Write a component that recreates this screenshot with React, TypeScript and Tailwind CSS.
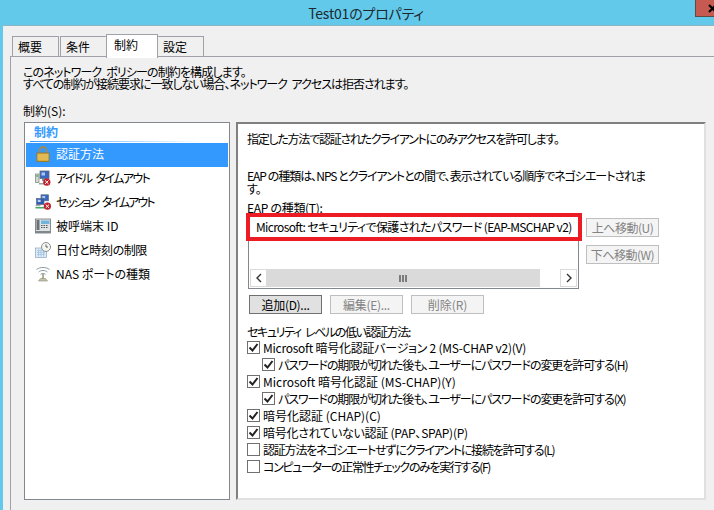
import React from "react";

const LockIcon = () => (
  <svg width="16" height="16" viewBox="0 0 16 16">
    <path d="M4.5 8V4.5a3.5 3.5 0 0 1 7 0V8" fill="none" stroke="#a08a50" strokeWidth="1.8" />
    <rect x="2" y="7" width="12" height="8.5" fill="#d8a93c" stroke="#9a7420" strokeWidth="0.8" />
    <path d="M2.5 9h11M2.5 11h11M2.5 13h11" stroke="#f0cf70" strokeWidth="0.9" />
  </svg>
);

const RedX = ({ x, y }: { x: number; y: number }) => (
  <g>
    <circle cx={x} cy={y} r="3.6" fill="#c0202a" />
    <path d={`M${x - 1.7} ${y - 1.7}l3.4 3.4M${x + 1.7} ${y - 1.7}l-3.4 3.4`} stroke="#fff" strokeWidth="1" />
  </g>
);

const IdleIcon = () => (
  <svg width="16" height="16" viewBox="0 0 16 16">
    <rect x="0.5" y="4" width="3.5" height="8.5" fill="#d4d8d4" stroke="#7a8078" strokeWidth="0.7" />
    <rect x="1.2" y="5.2" width="2" height="1.5" fill="#50b050" />
    <rect x="5" y="1" width="9" height="7.5" fill="#3a66c0" stroke="#5a6a80" strokeWidth="0.8" />
    <rect x="6.5" y="2.5" width="3.5" height="3" fill="#a8c8f0" />
    <path d="M7 9h5v2H7z" fill="#8a94a0" />
    <path d="M4 13h7v1.5H4z" fill="#9aa2aa" />
    <RedX x={11.8} y={12.2} />
  </svg>
);

const SessionIcon = () => (
  <svg width="16" height="16" viewBox="0 0 16 16">
    <rect x="6" y="0.8" width="7.5" height="6" fill="#3a66c0" stroke="#5a6a80" strokeWidth="0.7" />
    <rect x="7.2" y="2" width="3" height="2.4" fill="#a8c8f0" />
    <rect x="1.5" y="4.5" width="7.5" height="6" fill="#2f58b0" stroke="#5a6a80" strokeWidth="0.7" />
    <rect x="2.7" y="5.7" width="3" height="2.4" fill="#b8d4f4" />
    <path d="M0.5 11h5v1.2h-5z" fill="#a0a8a8" />
    <path d="M0.5 13h9v1.5h-9z" fill="#40a860" />
    <RedX x={12.4} y={12.2} />
  </svg>
);

const PhoneIcon = () => (
  <svg width="16" height="16" viewBox="0 0 16 16">
    <rect x="0.5" y="1" width="15" height="14" fill="#dfe2e2" stroke="#6c7478" strokeWidth="0.8" />
    <rect x="1.5" y="2" width="3" height="10" fill="#687078" />
    <rect x="6" y="2.5" width="8.5" height="3.5" fill="#70b4dc" />
    <path d="M6 7.5h1.5M8.5 7.5H10M11 7.5h1.5M6 9.5h1.5M8.5 9.5H10M11 9.5h1.5" stroke="#505860" strokeWidth="1" />
    <path d="M1 13h14v2H1z" fill="#7f888c" />
  </svg>
);

const ClockIcon = () => (
  <svg width="16" height="16" viewBox="0 0 16 16">
    <rect x="0.5" y="6" width="11" height="9.5" fill="#dcecf8" stroke="#8aa4bc" strokeWidth="0.7" />
    <path d="M2 8.5h8M2 10.5h8M2 12.5h8M3.5 7.5v7M6 7.5v7M8.5 7.5v7" stroke="#9cc0de" strokeWidth="0.7" />
    <circle cx="11" cy="5" r="4.5" fill="#f4f4f0" stroke="#8a8e90" strokeWidth="1" />
    <path d="M11 2.5V5h2" fill="none" stroke="#505458" strokeWidth="0.9" />
  </svg>
);

const AntennaIcon = () => (
  <svg width="16" height="16" viewBox="0 0 16 16">
    <path d="M1.5 3.5C5 .8 11 .8 14.5 3.5M3.5 6C6 4 10 4 12.5 6M5.5 8.3c1.4-1 3.6-1 5 0" fill="none" stroke="#8e9aa2" strokeWidth="1" />
    <path d="M8 8v5" stroke="#9a9a80" strokeWidth="1.6" />
    <path d="M3.5 15l2-2.5h5l2 2.5z" fill="#c8c2a8" stroke="#8a8a78" strokeWidth="0.6" />
  </svg>
);

const constraints = [
  { label: "アイドル タイムアウト", icon: <IdleIcon />, track: "tracking-[-1.6px] [word-spacing:3px]" },
  { label: "セッション タイムアウト", icon: <SessionIcon />, track: "tracking-[-1.9px] [word-spacing:3px]" },
  { label: "被呼端末 ID", icon: <PhoneIcon />, track: "" },
  { label: "日付と時刻の制限", icon: <ClockIcon />, track: "tracking-[-0.4px]" },
  { label: "NAS ポートの種類", icon: <AntennaIcon />, track: "" },
];

const checks = [
  { label: "Microsoft 暗号化認証バージョン 2 (MS-CHAP v2)(V)", checked: true, nested: false, track: "tracking-[-0.25px]" },
  { label: "パスワードの期限が切れた後も、ユーザーにパスワードの変更を許可する(H)", checked: true, nested: true, track: "tracking-[-1.05px]" },
  { label: "Microsoft 暗号化認証 (MS-CHAP)(Y)", checked: true, nested: false, track: "" },
  { label: "パスワードの期限が切れた後も、ユーザーにパスワードの変更を許可する(X)", checked: true, nested: true, track: "tracking-[-1.05px]" },
  { label: "暗号化認証 (CHAP)(C)", checked: true, nested: false, track: "" },
  { label: "暗号化されていない認証 (PAP、SPAP)(P)", checked: true, nested: false, track: "tracking-[-0.25px]" },
  { label: "認証方法をネゴシエートせずにクライアントに接続を許可する(L)", checked: false, nested: false, track: "tracking-[-1.2px]" },
  { label: "コンピューターの正常性チェックのみを実行する(F)", checked: false, nested: false, track: "tracking-[-1.35px]" },
];

function Tab({ label, active }: { label: string; active?: boolean }) {
  if (active) {
    return (
      <div className="relative z-10 -mb-[2px] -mx-px h-[24px] w-[52px] border border-b-0 border-[#a0a0a8] bg-white pt-[2px] pl-[7px] leading-[16px]">
        {label}
      </div>
    );
  }
  return (
    <div className="h-[20px] w-[47px] border border-b-0 border-[#a0a0a8] bg-[#f0f0f0] pt-[2px] pl-[5px] leading-[16px]">
      {label}
    </div>
  );
}

function Button({ label, primary, className }: { label: string; primary?: boolean; className?: string }) {
  return (
    <div
      className={`flex h-[19px] w-[73px] items-center justify-center border ${
        primary ? "border-[#707070] bg-[#e1e1e1] text-black" : "border-[#bfbfbf] bg-[#f4f4f4] text-[#838383]"
      } ${className ?? ""}`}
    >
      {label}
    </div>
  );
}

function Check({ checked }: { checked: boolean }) {
  return (
    <div className="flex h-[13px] w-[13px] shrink-0 items-center justify-center border border-[#707070] bg-white">
      {checked && (
        <svg width="11" height="11" viewBox="0 0 11 11">
          <path d="M1.5 5.5l3 3 5-6.5" fill="none" stroke="#222" strokeWidth="2" />
        </svg>
      )}
    </div>
  );
}

export default function App() {
  return (
    <div className="flex h-[510px] w-[714px] flex-col overflow-hidden bg-[#63c9ea] font-['Noto_Sans_CJK_JP',sans-serif] text-[12px] leading-[12px] text-black [font-feature-settings:'palt']">
      <div className="relative flex h-[25px] shrink-0 items-center justify-center pl-[18px] text-[14px] tracking-[-0.2px] text-[#1c2a30]">
        Test01のプロパティ
        <div className="absolute top-0 right-0 flex h-[17px] w-[19px] items-center overflow-hidden border-b border-l border-[#5e4a48] bg-[#c75a50] pl-[12px]">
          <svg width="9" height="9" viewBox="0 0 9 9" className="shrink-0">
            <path d="M1 1l7 7M8 1L1 8" stroke="#000" strokeWidth="2.2" />
          </svg>
        </div>
      </div>
      <div className="ml-[3px] flex flex-1 flex-col border-t border-[#8fb4c4] bg-[#f0f0f0] pt-[8px] pl-[7px]">
        <div className="flex h-[22px] items-end pl-[2px]">
          <Tab label="概要" />
          <div className="w-px" />
          <Tab label="条件" />
          <Tab label="制約" active />
          <Tab label="設定" />
        </div>
        <div className="flex-1 border-t border-l border-[#a0a0a8] pt-[9px]">
          <div className="pl-[12px] whitespace-nowrap">
            <p className="tracking-[-0.88px] [word-spacing:3px]">このネットワーク ポリシーの制約を構成します。</p>
            <p className="tracking-[-1.02px] [word-spacing:3px]">すべての制約が接続要求に一致しない場合、ネットワーク アクセスは拒否されます。</p>
            <p className="mt-[14px] leading-[13px]">制約(S):</p>
          </div>
          <div className="mt-[5px] flex gap-[6px] pl-[13px]">
            <div className="h-[378px] w-[206px] border border-[#828790] bg-white px-px">
              <div className="pl-[8px] pt-px text-[12px] leading-[15px] font-bold text-[#3399ff]">制約</div>
              <div className="mt-[2px] ml-[4px] h-px w-[170px] bg-gradient-to-r from-[#3399ff] to-white" />
              <div className="mt-[1px] flex h-[24px] items-center gap-[5px] bg-[#3399ff] pb-[3px] pl-[9px] text-white">
                <LockIcon />
                認証方法
              </div>
              {constraints.map((item) => (
                <div key={item.label} className={`flex h-[24px] items-center gap-[5px] pb-[3px] pl-[9px] ${item.track}`}>
                  {item.icon}
                  {item.label}
                </div>
              ))}
            </div>
            <div className="h-[378px] w-[470px] border-2 border-t-[#808080] border-r-[#e0e0e0] border-b-[#e0e0e0] border-l-[#808080] bg-white pt-[8px] pl-[9px] whitespace-nowrap">
              <p className="leading-[13px] tracking-[-1.25px]">指定した方法で認証されたクライアントにのみアクセスを許可します。</p>
              <p className="mt-[24px] leading-[13px] tracking-[-1px]">
                EAP の種類は、NPS とクライアントとの間で、表示されている順序でネゴシエートされま
                <br />
                す。
              </p>
              <p className="mt-[6px] leading-[13px] tracking-[-0.3px]">EAP の種類(T):</p>
              <div className="flex gap-[7px] pl-px">
                <div className="relative flex h-[75px] w-[331px] flex-col justify-end border border-[#828790] bg-white p-px">
                  <div className="absolute -top-[2px] -left-[3px] flex h-[28px] w-[336px] items-center border-4 border-[#ed1c24] pb-[1px] pl-[6px] tracking-[-0.65px]">
                    Microsoft: セキュリティで保護されたパスワード (EAP-MSCHAP v2)
                  </div>
                  <div className="flex h-[18px] w-[327px]">
                    <div className="flex w-[17px] items-center justify-center border border-[#dadada] bg-white">
                      <svg width="8" height="10" viewBox="0 0 8 10">
                        <path d="M6 1L2 5l4 4" fill="none" stroke="#333" strokeWidth="1.4" />
                      </svg>
                    </div>
                    <div className="flex w-[273px] items-center justify-center bg-[#dadada]">
                      <svg width="9" height="7" viewBox="0 0 9 7">
                        <path d="M1 0v7M4 0v7M7 0v7" stroke="#555" strokeWidth="1.4" />
                      </svg>
                    </div>
                    <div className="w-[20px] bg-white" />
                    <div className="flex w-[17px] items-center justify-center border border-[#dadada] bg-white">
                      <svg width="8" height="10" viewBox="0 0 8 10">
                        <path d="M2 1l4 4-4 4" fill="none" stroke="#333" strokeWidth="1.4" />
                      </svg>
                    </div>
                  </div>
                </div>
                <div className="flex flex-col gap-[8px] pt-[4px]">
                  <Button label="上へ移動(U)" className="tracking-[-0.5px]" />
                  <Button label="下へ移動(W)" className="tracking-[-0.5px]" />
                </div>
              </div>
              <div className="mt-[6px] flex gap-[8px] pl-[2px]">
                <Button label="追加(D)..." primary className="tracking-[-0.3px]" />
                <Button label="編集(E)..." className="tracking-[-0.3px]" />
                <Button label="削除(R)" />
              </div>
              <p className="mt-[11px] leading-[13px] tracking-[-1.4px] [word-spacing:3px]">セキュリティ レベルの低い認証方法:</p>
              <div className="mt-px">
                {checks.map((c, i) => (
                  <div key={i} className={`flex h-[17px] items-center gap-[3px] ${c.nested ? "pl-[15px]" : ""}`}>
                    <Check checked={c.checked} />
                    <span className={c.track}>{c.label}</span>
                  </div>
                ))}
              </div>
            </div>
          </div>
        </div>
      </div>
    </div>
  );
}
